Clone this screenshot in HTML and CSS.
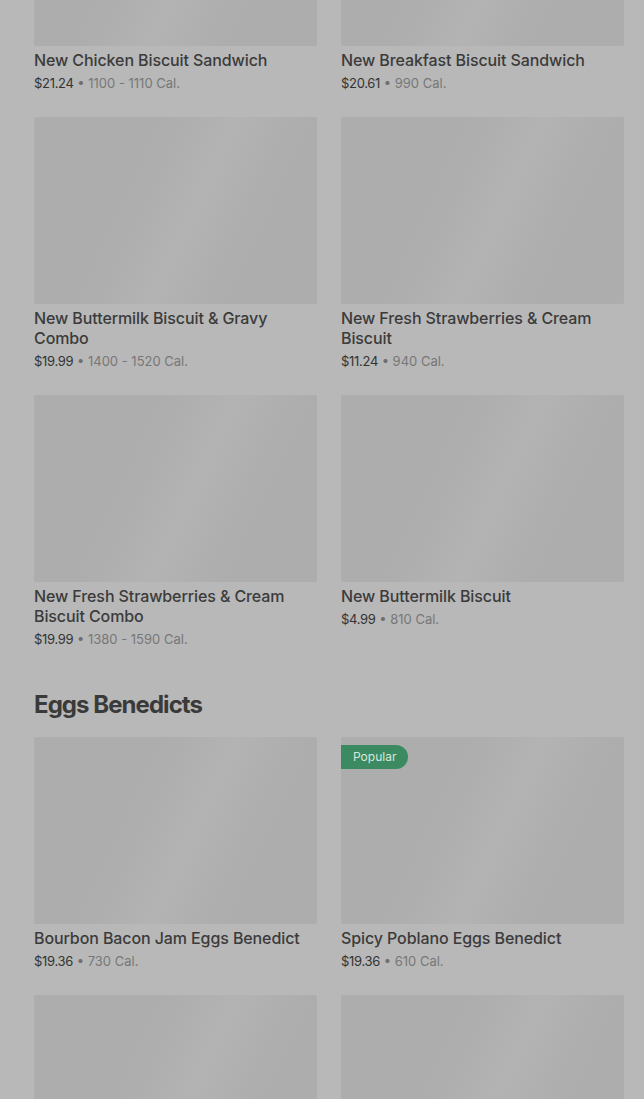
FILE: index.html
```html
<!DOCTYPE html>
<html>
<head>
<meta charset="utf-8">
<link rel="stylesheet" href="styles.css">
</head>
<body>
<div class="page">
  <div class="grid first">
    <div class="item">
      <div class="img top-cut"></div>
      <div class="title">New Chicken Biscuit Sandwich</div>
      <div class="meta"><span class="price">$21.24</span> • <span class="cal">1100 - 1110 Cal.</span></div>
    </div>
    <div class="item">
      <div class="img top-cut"></div>
      <div class="title">New Breakfast Biscuit Sandwich</div>
      <div class="meta"><span class="price">$20.61</span> • <span class="cal">990 Cal.</span></div>
    </div>
    <div class="item">
      <div class="img"></div>
      <div class="title">New Buttermilk Biscuit &amp; Gravy Combo</div>
      <div class="meta"><span class="price">$19.99</span> • <span class="cal">1400 - 1520 Cal.</span></div>
    </div>
    <div class="item">
      <div class="img"></div>
      <div class="title">New Fresh Strawberries &amp; Cream Biscuit</div>
      <div class="meta"><span class="price">$11.24</span> • <span class="cal">940 Cal.</span></div>
    </div>
    <div class="item">
      <div class="img"></div>
      <div class="title">New Fresh Strawberries &amp; Cream Biscuit Combo</div>
      <div class="meta"><span class="price">$19.99</span> • <span class="cal">1380 - 1590 Cal.</span></div>
    </div>
    <div class="item">
      <div class="img"></div>
      <div class="title">New Buttermilk Biscuit</div>
      <div class="meta"><span class="price">$4.99</span> • <span class="cal">810 Cal.</span></div>
    </div>
  </div>

  <h2 class="section-title">Eggs Benedicts</h2>

  <div class="grid">
    <div class="item">
      <div class="img"></div>
      <div class="title">Bourbon Bacon Jam Eggs Benedict</div>
      <div class="meta"><span class="price">$19.36</span> • <span class="cal">730 Cal.</span></div>
    </div>
    <div class="item">
      <div class="img"><span class="badge">Popular</span></div>
      <div class="title">Spicy Poblano Eggs Benedict</div>
      <div class="meta"><span class="price">$19.36</span> • <span class="cal">610 Cal.</span></div>
    </div>
    <div class="item">
      <div class="img"></div>
    </div>
    <div class="item">
      <div class="img"></div>
    </div>
  </div>
</div>
</body>
</html>
```

FILE: styles.css
```css
html, body {
  margin: 0;
  padding: 0;
  background: #b8b8b8;
  overflow: hidden;
}
body {
  font-family: Inter, "Noto Sans", sans-serif;
  color: #3a3a3a;
}
.page {
  padding: 0 20px 0 34px;
  margin-top: -141px;
}
.grid {
  display: grid;
  grid-template-columns: 283px 283px;
  column-gap: 24px;
  row-gap: 24px;
}
.item {
  display: flex;
  flex-direction: column;
}
.img {
  position: relative;
  height: 187px;
  background: linear-gradient(115deg, #adadad 0%, #adadad 35%, #b3b3b3 55%, #adadad 75%, #adadad 100%);
  border-radius: 2px;
}
.title {
  margin-top: 4px;
  font-size: 16px;
  line-height: 20px;
  font-weight: 500;
  color: #3b3b3b;
  letter-spacing: -0.1px;
}
.meta {
  margin-top: 3px;
  font-size: 13px;
  line-height: 20px;
  color: #6f6f6f;
}
.price {
  color: #333333;
  letter-spacing: -0.3px;
}
.cal {
  color: #777777;
}
.section-title {
  margin: 40px 0 16px;
  font-size: 24px;
  line-height: 32px;
  font-weight: 700;
  color: #3a3a3a;
  letter-spacing: -0.95px;
}
.badge {
  position: absolute;
  left: 0;
  top: 8px;
  height: 24px;
  line-height: 24px;
  padding: 0 12px 0 12px;
  background: #3c8a61;
  color: #d9e6de;
  font-size: 12px;
  border-radius: 0 12px 12px 0;
}
```
